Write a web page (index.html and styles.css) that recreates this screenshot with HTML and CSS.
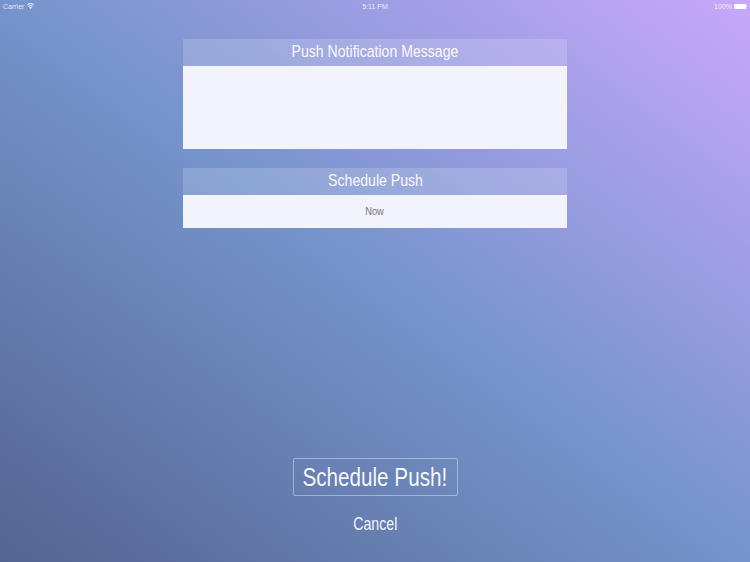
FILE: index.html
```html
<!DOCTYPE html>
<html lang="en">

<head>
    <meta charset="utf-8">
    <meta name="viewport" content="width=device-width, initial-scale=1.0">
    <title>Schedule Push</title>

    <link rel="stylesheet" href="styles.css">
</head>

<body>

    <header class="statusbar">
        <div class="status-left">
            <span>Carrier</span>
            <svg class="wifi" width="7" height="6" viewBox="0 0 14 12">
                <path d="M0.5 4 A9.5 9.5 0 0 1 13.5 4" fill="none" stroke="#fff" stroke-width="2"/>
                <path d="M3 6.6 A6 6 0 0 1 11 6.6" fill="none" stroke="#fff" stroke-width="2"/>
                <path d="M7 12 L4.6 8.8 A3.6 3.6 0 0 1 9.4 8.8 Z" fill="#fff"/>
            </svg>
        </div>
        <div class="status-mid">5:11 PM</div>
        <div class="status-right">
            <span>100%</span>
            <div class="battery"></div>
        </div>
    </header>

    <main class="formular">
        <section class="felt">
            <h2 class="smal"><span>Push Notification Message</span></h2>
            <div class="besked"></div>
        </section>

        <section class="felt">
            <h2 class="smal"><span>Schedule Push</span></h2>
            <div class="tid smal"><span>Now</span></div>
        </section>
    </main>

    <footer class="knapper">
        <button class="schedule smal"><span>Schedule Push!</span></button>
        <button class="cancel smal"><span>Cancel</span></button>
    </footer>

</body>

</html>
```

FILE: styles.css
```css
body * {
    box-sizing: border-box;
}

html, body {
    height: 100%;
}

body {
    margin: 0;
    padding: 0;
    height: 562px;
    overflow: hidden;
    display: flex;
    flex-direction: column;
    font-family: "Liberation Sans", Arial, sans-serif;
    color: white;
    background: linear-gradient(to top right, #556391 0%, #7594cb 50%, #c8a8fc 100%);
}

/* condensed look, no narrow font installed */
.smal {
    display: flex;
    justify-content: center;
    align-items: center;
}

.smal span {
    flex: none;
    white-space: nowrap;
    transform: scaleX(0.81);
}

.statusbar {
    height: 12px;
    padding: 0 3px;
    display: grid;
    grid-template-columns: 1fr auto 1fr;
    align-items: center;
    font-size: 7px;
    color: rgba(255, 255, 255, 0.8);
}

.status-left {
    display: flex;
    align-items: center;
    gap: 3px;
}

.status-right {
    display: flex;
    align-items: center;
    justify-content: flex-end;
    gap: 2px;
    padding-right: 1px;
}

.battery {
    position: relative;
    width: 12px;
    height: 5px;
    border-radius: 1px;
    background-color: white;
}

.battery::after {
    content: "";
    position: absolute;
    right: -1px;
    top: 1.5px;
    width: 1px;
    height: 2px;
    background-color: rgba(255, 255, 255, 0.7);
}

.formular {
    width: 384px;
    margin: 27px auto 0;
    display: flex;
    flex-direction: column;
    gap: 19px;
}

.felt h2 {
    margin: 0;
    height: 27px;
    padding-bottom: 2px;
    font-size: 17.4px;
    font-weight: normal;
    color: rgba(255, 255, 255, 0.95);
    background-color: rgba(255, 255, 255, 0.17);
}

.besked {
    height: 83px;
    background-color: #f3f4fb;
}

.tid {
    height: 33px;
    padding-bottom: 1px;
    font-size: 11.5px;
    color: #77777c;
    background-color: #f3f4fb;
}

.knapper {
    margin-top: auto;
    padding-bottom: 26px;
    display: flex;
    flex-direction: column;
    align-items: center;
    gap: 17px;
}

.knapper button {
    font-family: inherit;
    color: rgba(255, 255, 255, 0.95);
    background: none;
    padding: 0;
}

.schedule {
    width: 165px;
    height: 38px;
    font-size: 26.5px;
    border: 1px solid rgba(255, 255, 255, 0.4);
    border-radius: 2px;
}

.schedule span {
    transform: scaleX(0.78);
}

.cancel {
    height: 23px;
    font-size: 17.5px;
    border: 0;
}
```
